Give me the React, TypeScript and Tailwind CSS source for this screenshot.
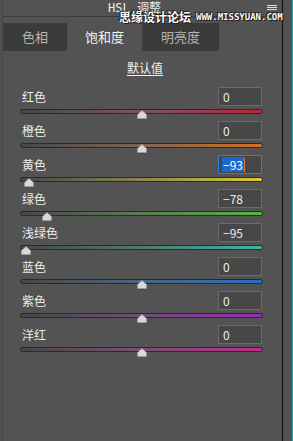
import React from 'react';

type Row = {
  label: string;
  value: number;
  track: string;
  focused?: boolean;
};

const rows: Row[] = [
  { label: '红色', value: 0, track: 'bg-[linear-gradient(to_right,#474747,#7a5560_50%,#c41e3c)]' },
  { label: '橙色', value: 0, track: 'bg-[linear-gradient(to_right,#474747,#7e6555_50%,#d26e20)]' },
  { label: '黄色', value: -93, track: 'bg-[linear-gradient(to_right,#474747,#8a8550_50%,#dccb35)]', focused: true },
  { label: '绿色', value: -78, track: 'bg-[linear-gradient(to_right,#474747,#5c7c55_50%,#4fb83c)]' },
  { label: '浅绿色', value: -95, track: 'bg-[linear-gradient(to_right,#474747,#4f7a72_50%,#38b8a0)]' },
  { label: '蓝色', value: 0, track: 'bg-[linear-gradient(to_right,#474747,#4c6580_50%,#2670c4)]' },
  { label: '紫色', value: 0, track: 'bg-[linear-gradient(to_right,#474747,#6e5078_50%,#9a2db4)]' },
  { label: '洋红', value: 0, track: 'bg-[linear-gradient(to_right,#474747,#7a5070_50%,#c42a8e)]' },
];

const fmt = (v: number) => (v < 0 ? `\u2212${Math.abs(v)}` : `${v}`);

const Thumb: React.FC<{ value: number }> = ({ value }) => {
  // track is 243px wide, thumb centred on value
  const left = ((value + 100) / 200) * 243 - 5;
  return (
    <svg
      className="absolute top-[1px]"
      style={{ left }}
      width="10"
      height="9"
      viewBox="0 0 10 9"
    >
      <polygon points="5,0.5 9.5,4.5 9.5,8.5 0.5,8.5 0.5,4.5" fill="#d9d9d9" stroke="#9a9a9a" strokeWidth="0.6" />
    </svg>
  );
};

const SliderRow: React.FC<{ row: Row }> = ({ row }) => (
  <div className="flex flex-col">
    <div className="flex h-[19px] items-center justify-between pl-[19px] pr-[20px]">
      <span className="text-[12px] leading-[14px] text-[#ececec]">{row.label}</span>
      {row.focused ? (
        <div className="flex h-[19px] w-[44px] items-center border border-[#2f7fd6] bg-[#474747] pl-[3px]">
          <span className="bg-[#1a68cc] px-[1px] text-[12px] leading-[15px] text-white">{fmt(row.value)}</span>
          <span className="h-[14px] w-[1px] bg-[#e8782a]" />
        </div>
      ) : (
        <div className="flex h-[19px] w-[44px] items-center border border-[#6a6a6a] bg-[#474747] pl-[4px] text-[12px] text-[#ededed]">
          {fmt(row.value)}
        </div>
      )}
    </div>
    <div className="relative mt-[3px] mb-[7px] ml-[17px] h-[5px] w-[243px]">
      <div className={`h-[5px] w-[243px] rounded-full border border-[#2a2a2a] ${row.track}`} />
      <Thumb value={row.value} />
    </div>
  </div>
);

export default function App() {
  return (
    <div
      className="relative flex h-[441px] w-[293px] overflow-hidden bg-[#535353]"
      style={{ fontFamily: '"Noto Sans CJK SC", "Noto Sans", sans-serif' }}
    >
      <div className="w-[3px] border-r border-[#474747] bg-[#505050]" />

      <div className="flex w-[279px] flex-col">
        {/* header */}
        <div className="flex h-[16px] items-start justify-between border-b border-[#3c3c3c] box-content">
          <span
            className="pl-[105px] pt-[2px] text-[12px] leading-[13px] text-[#ededed]"
            style={{ fontFamily: '"DejaVu Sans Mono", "Noto Sans CJK SC", monospace' }}
          >
            HSL 调整
          </span>
          <div className="mr-[5px] mt-[5px] flex w-[10px] flex-col gap-[1px]">
            <span className="h-[1px] bg-[#e0e0e0]" />
            <span className="h-[1px] bg-[#e0e0e0]" />
            <span className="h-[1px] bg-[#e0e0e0]" />
          </div>
        </div>

        {/* tabs */}
        <div className="mt-[6px] flex h-[28px]">
          <div className="flex w-[64px] items-center justify-center bg-[#3b3b3b] text-[13px] text-[#b4b4b4]">色相</div>
          <div className="flex w-[75px] items-center justify-center bg-[#535353] text-[13px] text-[#f2f2f2]">饱和度</div>
          <div className="flex w-[77px] items-center justify-center bg-[#3b3b3b] text-[13px] text-[#b4b4b4]">明亮度</div>
        </div>

        <div className="mt-[10px] flex justify-center pl-[5px]">
          <span className="text-[12px] leading-[14px] text-[#f0f0f0] underline underline-offset-2">默认值</span>
        </div>

        <div className="mt-[12px] flex flex-col">
          {rows.map((r) => (
            <SliderRow key={r.label} row={r} />
          ))}
        </div>
      </div>

      <div className="w-[1px] bg-[#101010]" />
      <div className="w-[9px] bg-[#525252]" />
      <div className="w-[1px] bg-[#2aa5b3]" />

      {/* watermark over the header */}
      <div className="absolute left-[119px] top-[10px] flex items-end gap-[5px] text-white [text-shadow:0_0_1px_#000,1px_1px_0_#222,-1px_-1px_0_#222]">
        <span className="text-[12px] font-bold leading-[13px]">思缘设计论坛</span>
        <span
          className="text-[9px] font-bold leading-[11px]"
          style={{ fontFamily: '"DejaVu Sans Mono", monospace' }}
        >
          WWW.MISSYUAN.COM
        </span>
      </div>
    </div>
  );
}
